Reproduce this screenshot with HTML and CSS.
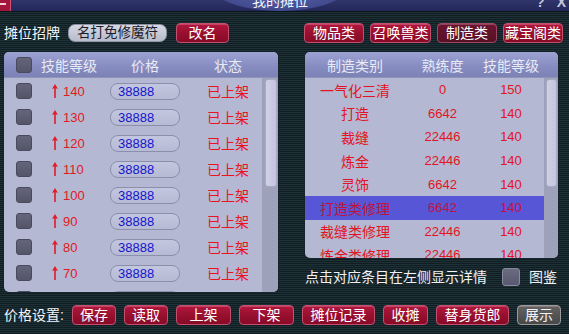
FILE: index.html
```html
<!DOCTYPE html>
<html lang="zh">
<head>
<meta charset="utf-8">
<title>我的摊位</title>
<link rel="stylesheet" href="styles.css">
</head>
<body>
<div class="app">
  <div class="titlebar">
    <div class="tb-left"><span class="menu-icon"><i></i></span></div>
    <div class="tb-tab"><span class="tb-title">我的摊位</span></div>
    <div class="tb-right"><span class="tb-btn">?</span><span class="tb-btn">X</span></div>
  </div>

  <div class="toprow">
    <span class="label">摊位招牌</span>
    <span class="namepill">名打免修魔符</span>
    <span class="btn w53">改名</span>
    <div class="tabs">
      <span class="btn w60">物品类</span>
      <span class="btn w61">召唤兽类</span>
      <span class="btn w60 sel">制造类</span>
      <span class="btn w60">藏宝阁类</span>
    </div>
  </div>

  <div class="main">
    <div class="panel left">
      <div class="phead">
        <span class="cb"></span>
        <span class="h-level">技能等级</span>
        <span class="h-price">价格</span>
        <span class="h-status">状态</span>
      </div>
      <div class="pbody">
        <div class="rows">
          <div class="row"><span class="cb"></span><span class="lvl"><svg class="arrow" viewBox="0 0 6 14" width="6" height="14"><path d="M3 0 L6 5 L3.8 4.2 L3.8 14 L2.2 14 L2.2 4.2 L0 5 Z"/></svg>140</span><span class="price">38888</span><span class="status">已上架</span></div>
          <div class="row"><span class="cb"></span><span class="lvl"><svg class="arrow" viewBox="0 0 6 14" width="6" height="14"><path d="M3 0 L6 5 L3.8 4.2 L3.8 14 L2.2 14 L2.2 4.2 L0 5 Z"/></svg>130</span><span class="price">38888</span><span class="status">已上架</span></div>
          <div class="row"><span class="cb"></span><span class="lvl"><svg class="arrow" viewBox="0 0 6 14" width="6" height="14"><path d="M3 0 L6 5 L3.8 4.2 L3.8 14 L2.2 14 L2.2 4.2 L0 5 Z"/></svg>120</span><span class="price">38888</span><span class="status">已上架</span></div>
          <div class="row"><span class="cb"></span><span class="lvl"><svg class="arrow" viewBox="0 0 6 14" width="6" height="14"><path d="M3 0 L6 5 L3.8 4.2 L3.8 14 L2.2 14 L2.2 4.2 L0 5 Z"/></svg>110</span><span class="price">38888</span><span class="status">已上架</span></div>
          <div class="row"><span class="cb"></span><span class="lvl"><svg class="arrow" viewBox="0 0 6 14" width="6" height="14"><path d="M3 0 L6 5 L3.8 4.2 L3.8 14 L2.2 14 L2.2 4.2 L0 5 Z"/></svg>100</span><span class="price">38888</span><span class="status">已上架</span></div>
          <div class="row"><span class="cb"></span><span class="lvl"><svg class="arrow" viewBox="0 0 6 14" width="6" height="14"><path d="M3 0 L6 5 L3.8 4.2 L3.8 14 L2.2 14 L2.2 4.2 L0 5 Z"/></svg>90</span><span class="price">38888</span><span class="status">已上架</span></div>
          <div class="row"><span class="cb"></span><span class="lvl"><svg class="arrow" viewBox="0 0 6 14" width="6" height="14"><path d="M3 0 L6 5 L3.8 4.2 L3.8 14 L2.2 14 L2.2 4.2 L0 5 Z"/></svg>80</span><span class="price">38888</span><span class="status">已上架</span></div>
          <div class="row"><span class="cb"></span><span class="lvl"><svg class="arrow" viewBox="0 0 6 14" width="6" height="14"><path d="M3 0 L6 5 L3.8 4.2 L3.8 14 L2.2 14 L2.2 4.2 L0 5 Z"/></svg>70</span><span class="price">38888</span><span class="status">已上架</span></div>
          <div class="row"><span class="cb"></span><span class="lvl"><svg class="arrow" viewBox="0 0 6 14" width="6" height="14"><path d="M3 0 L6 5 L3.8 4.2 L3.8 14 L2.2 14 L2.2 4.2 L0 5 Z"/></svg>60</span><span class="price">38888</span><span class="status">已上架</span></div>
        </div>
        <div class="scroll"><div class="thumb"></div></div>
      </div>
    </div>

    <div class="rightcol">
      <div class="panel right">
        <div class="phead rhead">
          <span class="c1">制造类别</span>
          <span class="c2">熟练度</span>
          <span class="c3">技能等级</span>
        </div>
        <div class="pbody">
          <div class="rows">
            <div class="rrow"><span class="c1">一气化三清</span><span class="c2">0</span><span class="c3">150</span></div>
            <div class="rrow"><span class="c1">打造</span><span class="c2">6642</span><span class="c3">140</span></div>
            <div class="rrow"><span class="c1">裁缝</span><span class="c2">22446</span><span class="c3">140</span></div>
            <div class="rrow"><span class="c1">炼金</span><span class="c2">22446</span><span class="c3">140</span></div>
            <div class="rrow"><span class="c1">灵饰</span><span class="c2">6642</span><span class="c3">140</span></div>
            <div class="rrow selrow"><span class="c1">打造类修理</span><span class="c2">6642</span><span class="c3">140</span></div>
            <div class="rrow"><span class="c1">裁缝类修理</span><span class="c2">22446</span><span class="c3">140</span></div>
            <div class="rrow"><span class="c1">炼金类修理</span><span class="c2">22446</span><span class="c3">140</span></div>
          </div>
          <div class="scroll rscroll"><div class="thumb"></div></div>
        </div>
      </div>
      <div class="info">
        <span class="hint">点击对应条目在左侧显示详情</span>
        <span class="cb big"></span>
        <span class="hint">图鉴</span>
      </div>
    </div>
  </div>

  <div class="bottom">
    <span class="label">价格设置:</span>
    <span class="btn w44">保存</span>
    <span class="btn w44">读取</span>
    <span class="btn w55">上架</span>
    <span class="btn w55">下架</span>
    <span class="btn w73">摊位记录</span>
    <span class="btn w45">收摊</span>
    <span class="btn w73">替身货郎</span>
    <span class="btn w44 grey">展示</span>
  </div>
</div>
</body>
</html>
```

FILE: styles.css
```css
html, body {
  margin: 0;
  padding: 0;
}
body {
  width: 569px;
  height: 334px;
  overflow: hidden;
  background: repeating-linear-gradient(to bottom, #1e3137 0, #1e3137 1px, #101d22 1px, #101d22 2px);
  font-family: "Liberation Sans", "Noto Sans CJK SC", sans-serif;
  color: #fff;
}
.app {
  display: flex;
  flex-direction: column;
  height: 334px;
}

/* title bar */
.titlebar {
  height: 11px;
  display: grid;
  grid-template-columns: 215px 130px 1fr;
  background: linear-gradient(to bottom, #30356a, #23275a);
  border-bottom: 1px solid #0b1519;
  overflow: hidden;
}
.tb-left { display: flex; align-items: flex-start; }
.menu-icon {
  width: 10px;
  height: 11px;
  background: #a3153a;
  border-right: 1px solid #d05070;
  display: flex;
  align-items: flex-start;
}
.menu-icon i {
  display: block;
  width: 6px;
  height: 2px;
  margin-top: 3px;
  background: #f0d0d8;
}
.tb-tab {
  height: 22px;
  margin-top: -11px;
  border-radius: 0 0 65px 65px / 0 0 22px 22px;
  background: radial-gradient(ellipse at 50% 30%, #5660a4 0%, #444c90 60%, #363d7c 100%);
  display: flex;
  justify-content: center;
  align-items: flex-end;
}
.tb-title {
  font-size: 14px;
  line-height: 14px;
  margin-bottom: 3px;
  color: #f4f4ff;
}
.tb-right {
  display: flex;
  justify-content: flex-end;
  gap: 12px;
  padding-right: 3px;
}
.tb-btn {
  font-size: 14px;
  line-height: 14px;
  margin-top: -5px;
  color: #c4c8dc;
  font-weight: bold;
}

/* top row */
.toprow {
  display: flex;
  align-items: center;
  height: 20px;
  margin-top: 11px;
  padding-left: 4px;
  padding-right: 6px;
}
.label {
  font-size: 14px;
  line-height: 18px;
  color: #f4f4f8;
}
.namepill {
  margin-left: 8px;
  width: 97px;
  height: 16px;
  border: 1px solid #8c92a4;
  border-radius: 7px;
  background: linear-gradient(to bottom, #d4d8e2, #b8bccb);
  color: #1c1c2c;
  font-size: 13.5px;
  line-height: 16px;
  text-align: center;
}
.btn {
  box-sizing: border-box;
  height: 20px;
  border: 1px solid #c45070;
  border-radius: 4px;
  background: linear-gradient(to bottom, #b2173f 0%, #98102f 50%, #870a27 100%);
  box-shadow: inset 0 1px 0 rgba(255, 200, 210, 0.25);
  color: #ffffff;
  font-size: 14px;
  line-height: 18px;
  text-align: center;
  flex: none;
}
.toprow .w53 { margin-left: 9px; }
.btn.sel {
  background: linear-gradient(to bottom, #6c1430 0%, #571026 100%);
  border-color: #9c4a62;
}
.btn.grey {
  background: linear-gradient(to bottom, #626262 0%, #474747 100%);
  border-color: #9a9a9a;
  color: #f4f4f4;
}
.w44 { width: 44px; }
.w45 { width: 45px; }
.w53 { width: 53px; }
.w55 { width: 55px; }
.w60 { width: 60px; }
.w61 { width: 61px; }
.w73 { width: 73px; }
.tabs {
  margin-left: auto;
  display: flex;
  gap: 6px;
}

/* main */
.main {
  display: flex;
  margin-top: 9px;
  height: 240px;
  padding-left: 4px;
}
.panel {
  border-radius: 5px;
  overflow: hidden;
  background: #b4b8d2;
  display: flex;
  flex-direction: column;
  box-shadow: 0 0 0 1px rgba(20, 30, 40, 0.5);
}
.panel.left {
  width: 274px;
  height: 240px;
}
.phead {
  flex: none;
  height: 26px;
  display: flex;
  align-items: center;
  background: linear-gradient(to bottom, #9ca2d2 0%, #868cc0 60%, #7c82b6 100%);
  color: #e8eaf6;
  font-size: 14px;
  border-bottom: 1px solid #9094b8;
  box-sizing: border-box;
}
.cb {
  flex: none;
  box-sizing: border-box;
  width: 16px;
  height: 16px;
  border-radius: 3px;
  background: linear-gradient(to bottom, #64647a, #55556a);
  border: 1px solid #4a4a5e;
}
.phead .cb { margin-left: 12px; }
.h-level { margin-left: 9px; }
.h-price { margin-left: 34px; }
.h-status { margin-left: 55px; }

.pbody {
  flex: 1;
  display: flex;
  min-height: 0;
}
.rows {
  flex: 1;
  overflow: hidden;
}
.row {
  height: 26px;
  display: flex;
  align-items: center;
}
.row .cb { margin-left: 12px; }
.lvl {
  margin-left: 20px;
  width: 53px;
  display: flex;
  align-items: center;
  color: #e01a26;
  font-size: 13px;
}
.arrow {
  fill: #e01a26;
  margin-right: 5px;
  margin-top: -1px;
}
.price {
  margin-left: 5px;
  box-sizing: border-box;
  width: 70px;
  height: 17px;
  border: 1px solid #8a90ac;
  border-radius: 8px;
  background: linear-gradient(to bottom, #c2c6de, #b6bad4);
  color: #1515cc;
  font-size: 13px;
  line-height: 15px;
  padding-left: 7px;
}
.status {
  margin-left: 27px;
  color: #e8141e;
  font-size: 14px;
}
.scroll {
  flex: none;
  width: 16px;
  background: #9da1b9;
  padding-left: 3px;
  padding-right: 1px;
  box-sizing: border-box;
}
.thumb {
  height: 108px;
  margin-top: 1px;
  box-sizing: border-box;
  border: 1px solid #a8aac6;
  border-radius: 3px;
  background: linear-gradient(to right, #d0d0e6, #c4c4de);
}

/* right column */
.rightcol {
  margin-left: 27px;
  width: 253px;
  display: flex;
  flex-direction: column;
}
.panel.right {
  height: 206px;
}
.c1 { width: 100px; text-align: center; }
.c2 { width: 75px; text-align: center; }
.c3 { width: 62px; text-align: center; }
.rrow {
  height: 23.6px;
  display: flex;
  align-items: center;
  color: #e21424;
  font-size: 14px;
}
.rrow .c2, .rrow .c3 { font-size: 13px; }
.rrow.selrow {
  background: #5656d6;
  color: #c2123e;
}
.rscroll {
  width: 14px;
  padding-left: 2px;
}
.rscroll .thumb { height: 108px; }

.info {
  display: flex;
  align-items: center;
  margin-top: 10px;
  height: 18px;
}
.hint {
  font-size: 14px;
  color: #f2f2f6;
  line-height: 18px;
}
.cb.big {
  width: 18px;
  height: 18px;
  margin-left: 15px;
  margin-right: 9px;
  border-color: #8a8aa0;
  background: linear-gradient(to bottom, #6a6a80, #585870);
}

/* bottom */
.bottom {
  display: flex;
  align-items: center;
  gap: 8px;
  margin-top: 13px;
  padding-left: 4px;
  height: 20px;
}
```
